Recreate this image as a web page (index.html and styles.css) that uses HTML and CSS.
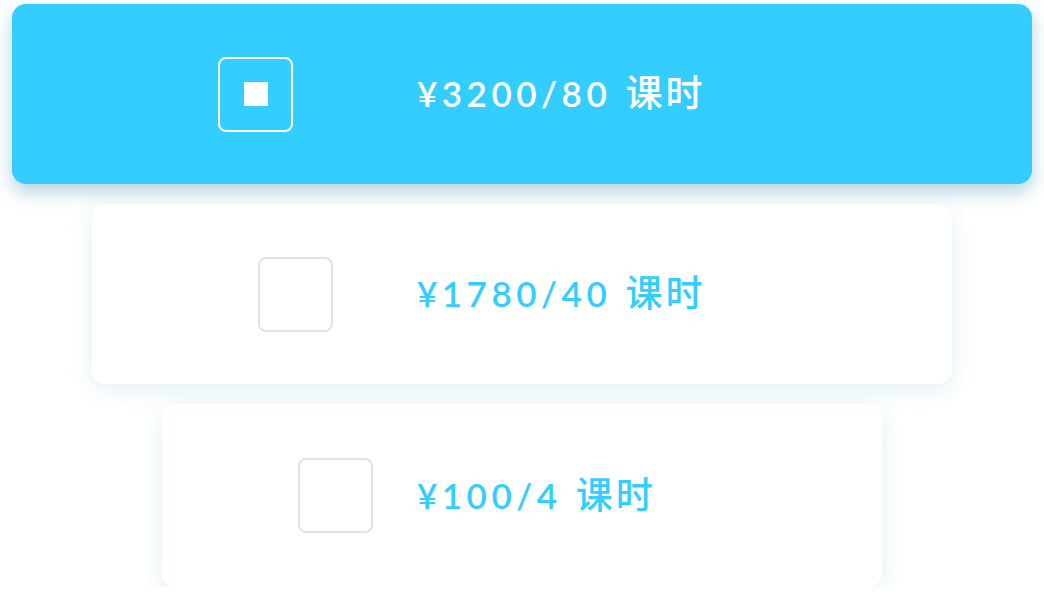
FILE: index.html
```html
<!DOCTYPE html>
<html lang="zh">
<head>
<meta charset="utf-8">
<title>课时套餐</title>
<link rel="stylesheet" href="styles.css">
</head>
<body>
<div class="plans">
  <div class="plan plan-active plan-1">
    <span class="check check-on"><span class="check-dot"></span></span>
    <span class="price">¥3200/80 <span class="unit">课时</span></span>
  </div>
  <div class="plan plan-2">
    <span class="check"></span>
    <span class="price">¥1780/40 <span class="unit">课时</span></span>
  </div>
  <div class="plan plan-3">
    <span class="check"></span>
    <span class="price">¥100/4 <span class="unit">课时</span></span>
  </div>
</div>
</body>
</html>
```

FILE: styles.css
```css
html, body {
  margin: 0;
  padding: 0;
  background: #ffffff;
}

.plans {
  display: flex;
  flex-direction: column;
  align-items: center;
  padding-top: 4px;
  gap: 20px;
}

.plan {
  box-sizing: border-box;
  height: 180px;
  border-radius: 14px;
  background: #ffffff;
  display: flex;
  align-items: center;
  box-shadow: 0 6px 22px rgba(120, 190, 215, 0.22);
}

.plan-1 {
  width: 1020px;
  padding-left: 206px;
  gap: 124px;
  background: #33ceff;
  box-shadow: 0 8px 18px rgba(40, 130, 165, 0.35);
}

.plan-2 {
  width: 860px;
  padding-left: 166px;
  gap: 84px;
}

.plan-3 {
  width: 720px;
  height: 183px;
  padding-left: 136px;
  gap: 44px;
}

.check {
  box-sizing: border-box;
  width: 75px;
  height: 75px;
  flex: none;
  border: 2px solid #dde3e8;
  border-radius: 8px;
  display: flex;
  align-items: center;
  justify-content: center;
}

.check-on {
  border-color: #ffffff;
}

.check-dot {
  width: 24px;
  height: 24px;
  background: #ffffff;
}

.price {
  font-family: "Lato", "Noto Sans CJK SC", sans-serif;
  font-size: 35px;
  font-weight: 600;
  letter-spacing: 4.5px;
  line-height: 40px;
  color: #33ceff;
  white-space: nowrap;
  margin-top: -4px;
}

.unit {
  font-family: "Noto Sans CJK SC", sans-serif;
  font-size: 37px;
  font-weight: 500;
  letter-spacing: 3px;
  margin-left: 1px;
}

.plan-active .price {
  color: #ffffff;
}
```
